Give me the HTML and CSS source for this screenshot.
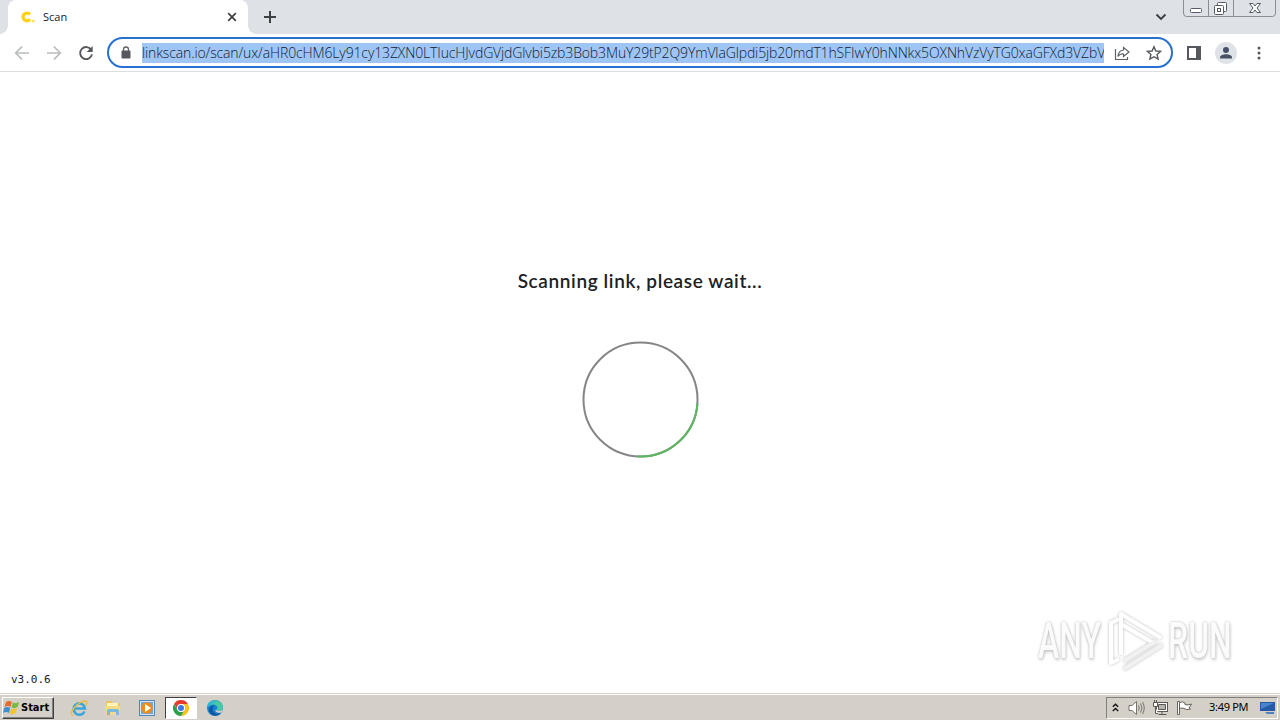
FILE: index.html
```
<!DOCTYPE html>
<html lang="en">
<head>
    <meta charset="UTF-8">
    <meta name="viewport" content="width=device-width, initial-scale=1.0">
    <title>Scan</title>
    <link rel="stylesheet" href="styles.css">
</head>
<body>
    <header class="tabstrip">
        <div class="tab">
            <svg class="favicon" width="16" height="16" viewBox="0 0 16 16">
                <path d="M9.800 5.500A3.800 3.800 0 1 0 9.900 10.200" fill="none" stroke="#fcd116" stroke-width="3.400"/>
                <circle cx="13.200" cy="12" r="1.500" fill="#fbdf62"/>
            </svg>
            <span class="tab-title">Scan</span>
            <svg class="tab-close" width="10" height="10" viewBox="0 0 10 10"><path d="M1.2 1.2 8.8 8.8M8.8 1.2 1.2 8.8" stroke="#3c4043" stroke-width="1.7"/></svg>
        </div>
        <svg class="new-tab" width="14" height="14" viewBox="0 0 14 14"><path d="M7 1v12M1 7h12" stroke="#3c4043" stroke-width="2"/></svg>
        <svg class="tab-search" width="12" height="8" viewBox="0 0 12 8"><path d="M1.5 1.5 6 6l4.500-4.500" fill="none" stroke="#3c4043" stroke-width="1.9"/></svg>
        <div class="window-buttons">
            <svg width="93" height="18" viewBox="0 0 93 18" fill="none" stroke="#8a8d93">
                <path d="M.5 0v13q0 3.500 3 3.500h86q3 0 3-3.500V0M25.500 0v16M50.500 0v16"/>
                <g fill="#fff" stroke="#555a66">
                    <rect x="7.500" y="8.500" width="11" height="4" rx="1"/>
                    <rect x="34.500" y="2.500" width="9" height="9" rx="1"/>
                    <rect x="31.500" y="5.500" width="9" height="9" rx="1"/>
                    <rect x="34.500" y="8.500" width="3" height="3"/>
                    <path d="M66.500 3.500h3.500l2 2.500 2-2.500h3.500l-3.500 4.500 3.500 4.500H74l-2-2.500-2 2.500h-3.500L70 8z"/>
                </g>
            </svg>
        </div>
    </header>

    <nav class="toolbar">
        <svg class="nav-icon" width="16" height="16" viewBox="0 0 16 16"><path d="M15 8H2M8 1.700 1.700 8 8 14.300" fill="none" stroke="#babcbe" stroke-width="1.700"/></svg>
        <svg class="nav-icon" width="16" height="16" viewBox="0 0 16 16"><path d="M1 8h13M8 1.700 14.300 8 8 14.300" fill="none" stroke="#babcbe" stroke-width="1.700"/></svg>
        <svg class="nav-icon" width="16" height="16" viewBox="0 0 16 16">
            <path d="M13.300 5A6 6 0 1 0 14 9.400" fill="none" stroke="#55585c" stroke-width="1.900"/>
            <path d="M14.700 1v6h-6z" fill="#55585c"/>
        </svg>
        <div class="omnibox">
            <svg class="lock" width="10" height="13" viewBox="0 0 10 13">
                <path d="M2.500 5V3.500a2.500 2.500 0 0 1 5 0V5" fill="none" stroke="#5f6368" stroke-width="1.300"/>
                <rect x=".5" y="4.500" width="9" height="8" rx="1" fill="#55585c"/>
            </svg>
            <div class="url"><span>linkscan.io/scan/ux/aHR0cHM6Ly91cy13ZXN0LTIucHJvdGVjdGlvbi5zb3Bob3MuY29tP2Q9YmVlaGlpdi5jb20mdT1hSFIwY0hNNkx5OXNhVzVyTG0xaGFXd3VZbV</span></div>
            <svg class="share" width="16" height="16" viewBox="0 0 16 16" fill="none" stroke="#5f6368" stroke-width="1.200">
                <path d="M1.500 4v10.500h12V12"/>
                <path d="M9.500 2.500 15 7l-5.500 4.500V9Q6 8.500 4 11.500 4.500 5.500 9.500 5z"/>
            </svg>
            <svg class="star" width="16" height="16" viewBox="0 0 16 16"><path d="M8 1.700 9.900 6l4.700.4-3.500 3.100 1 4.600L8 11.700l-4.100 2.400 1-4.600L1.400 6.400 6.100 6z" fill="none" stroke="#55585c" stroke-width="1.400"/></svg>
        </div>
        <svg class="panel-icon" width="14" height="14" viewBox="0 0 14 14"><path d="M1 1h12v12H1z" fill="none" stroke="#55585c" stroke-width="2"/><path d="M9 0h5v14H9z" fill="#55585c"/></svg>
        <svg class="avatar" width="22" height="22" viewBox="0 0 22 22"><circle cx="11" cy="11" r="11" fill="#dfe2e6"/><circle cx="11" cy="8" r="3" fill="#475066"/><path d="M5 16.500v-1.200c0-2 3.500-3.100 6-3.100s6 1.100 6 3.100v1.200z" fill="#475066"/></svg>
        <svg class="menu-icon" width="4" height="14" viewBox="0 0 4 14" fill="#55585c"><circle cx="2" cy="2" r="1.500"/><circle cx="2" cy="7" r="1.500"/><circle cx="2" cy="12" r="1.500"/></svg>
    </nav>

    <main class="page">
        <h1>Scanning link, please wait...</h1>
        <svg class="spinner" width="118" height="118" viewBox="0 0 118 118" fill="none" stroke-width="2">
            <circle cx="58.500" cy="58.500" r="57" stroke="#858585"/>
            <path d="M115.500 62.500A57 57 0 0 1 55.500 115.500" stroke="#5cb860"/>
        </svg>
        <span class="version">v3.0.6</span>
        <div class="watermark">
            <span class="mark-text mark-any">ANY</span>
            <svg width="60" height="64" viewBox="0 0 60 64" fill="none" stroke-linejoin="round">
                <g class="mark-logo" stroke="#fff" stroke-width="4">
                    <path d="M13 10 5 14v40l8-4"/>
                    <path d="M15 46V5l40 24"/>
                    <path d="M15 15l34 20"/>
                    <path d="M56 36 18 60M50 32 18 52" stroke="#f1f1f1"/>
                </g>
            </svg>
            <span class="mark-text mark-run">RUN</span>
        </div>
    </main>

    <footer class="taskbar">
        <div class="start">
            <svg width="17" height="16" viewBox="0 0 17 16">
                <path d="M3 2q3-2 6 0L7.500 7q-3-2-6 0z" fill="#e66b2c"/>
                <path d="M10 2.500q3 1.500 6-.5l-1.500 5q-3 2-6 .5z" fill="#79b943"/>
                <path d="M1.200 8q3-2 6 0L6 13q-3-2-6 0z" fill="#3f8ed0"/>
                <path d="M8.200 8.500q3 1.500 6-.5l-1.500 5q-3 2-6 .5z" fill="#f5c32c"/>
            </svg>
            <span>Start</span>
        </div>
        <div class="launchers">
            <div class="launcher">
                <svg width="18" height="18" viewBox="0 0 18 18" fill="none">
                    <path d="M14.500 12.500A5.700 5.700 0 1 1 15 9.500H5" stroke="#3ba5dd" stroke-width="2.600"/>
                    <path d="M3 16.500Q-1 15 4.500 8.500T16 2q2 1-.5 4.500" stroke="#e9bd3f" stroke-width="1.500"/>
                </svg>
            </div>
            <div class="launcher">
                <svg width="18" height="18" viewBox="0 0 18 18">
                    <path d="M2 2h6l1 2h7v11H2z" fill="#e9c75f"/>
                    <path d="M3 4h11v5H3z" fill="#fff3bb"/>
                    <path d="M1.500 7h15l-1 9h-13z" fill="#f4dc86"/>
                    <path d="M3 16v-4q0-2 2-2h8q2 0 2 2v4h-3v-3H6v3z" fill="#79b9dc"/>
                </svg>
            </div>
            <div class="launcher">
                <svg width="16" height="16" viewBox="0 0 16 16">
                    <rect x=".5" y=".5" width="15" height="15" fill="#d4e6f6" stroke="#4f87bd"/>
                    <rect x="2" y="2" width="12" height="12" fill="#70a7d5"/>
                    <circle cx="8" cy="8" r="5.800" fill="#ef8a1d"/>
                    <path d="M6 4v8l6-4z" fill="#fff"/>
                </svg>
            </div>
            <div class="launcher active">
                <svg width="16" height="16" viewBox="0 0 16 16">
                    <path d="M1.070 4A8 8 0 0 1 14.930 4H8A4 4 0 0 0 4.540 10z" fill="#e33b2e"/>
                    <path d="M14.930 4A8 8 0 0 1 8 16l3.460-6A4 4 0 0 0 8 4z" fill="#fbc116"/>
                    <path d="M8 16A8 8 0 0 1 1.070 4l3.470 6a4 4 0 0 0 6.920 0z" fill="#2c9f4b"/>
                    <circle cx="8" cy="8" r="3.900" fill="#fff"/>
                    <circle cx="8" cy="8" r="3" fill="#3b78e7"/>
                </svg>
            </div>
            <div class="launcher">
                <svg width="16" height="16" viewBox="0 0 16 16">
                    <circle cx="8" cy="8" r="8" fill="#1683d3"/>
                    <path d="M.2 7C1-2 15-2 16 7c0 4-4.500 4.500-6.500 3C12 7 9 4 5.500 4.500 3 4.800 1 6 .2 7z" fill="#47c9a3"/>
                    <path d="M.2 7C1.500 1 8 .5 11 2 7 2 4 4 2 6z" fill="#2eb5df"/>
                    <path d="M6 7c-2 5 3 8 8 6-4 5-12 2-12-3 0-3 3-5 6-4z" fill="#10569f"/>
                    <path d="M9.300 10c2 1.500 5 1 6.700-1l-1.500 3.500Q10 14 8 10.500z" fill="#d5d1c9"/>
                </svg>
            </div>
        </div>
        <div class="tray">
            <svg class="tray-more" width="7" height="9" viewBox="0 0 7 9" fill="none" stroke="#111" stroke-width="1.400"><path d="m.8 3.700 2.700-2.500 2.700 2.500M.8 8l2.700-2.500L6.200 8"/></svg>
            <svg class="tray-sound" width="17" height="16" viewBox="0 0 17 16" stroke="#77736d">
                <path d="M1 5.500h3l4.500-4v13l-4.500-4H1z" fill="#fff"/>
                <path d="M10.500 5.500q1.500 2.500 0 5M12.500 3.500q3 4.500 0 9M14.500 2q3.500 6 0 12" fill="none"/>
            </svg>
            <svg class="tray-net" width="17" height="16" viewBox="0 0 17 16" stroke="#5c5954">
                <rect x="4.500" y="2.500" width="11" height="9" fill="#fff"/>
                <path d="M6.500 4.500h7v5h-7z" fill="#b7b4af"/>
                <path d="M10 12v2M6.500 14.500h8" fill="none"/>
                <path d="M1.500 2.500h4v4h-4zM2.500 0v2M4.500 0v2M3.500 7v6.500H6" fill="#fff"/>
            </svg>
            <svg class="tray-flag" width="17" height="16" viewBox="0 0 17 16" stroke="#66625c" fill="#fff">
                <path d="M3.500 2.500q3-1.500 5.500.5v1.500q3 1 6.500-.5L13 8l1.500 1q-4 1.500-6.500-.5-2-1-4.500 0z"/>
                <path d="M1.500 1.500h2v13h-2z"/>
            </svg>
            <span class="clock">3:49 PM</span>
            <svg class="tray-desktop" width="16" height="14" viewBox="0 0 16 14"><path d="M0 1h15v9H0z" fill="#2459a5"/><path d="M1 2h13L1 8z" fill="#4786cf"/><path d="M5 11h9v2H7z" fill="#4d85b9"/></svg>
        </div>
    </footer>
</body>
</html>
```
FILE: styles.css
```
* {
    box-sizing: border-box;
}
body {
    margin: 0;
    width: 1280px;
    height: 720px;
    overflow: hidden;
    display: flex;
    flex-direction: column;
    background: #fff;
    font-family: "Noto Sans", sans-serif;
    color: #202124;
}
svg {
    display: block;
    flex: none;
}

/* browser chrome */
.tabstrip {
    height: 34px;
    flex: none;
    display: flex;
    align-items: center;
    background: #dee1e6;
    padding-left: 8px;
}
.tab {
    position: relative;
    width: 240px;
    height: 34px;
    display: flex;
    align-items: center;
    background: #fff;
    border-radius: 8px 8px 0 0;
    padding: 0 11px 0 12px;
}
.tab::before,
.tab::after {
    content: "";
    position: absolute;
    bottom: 0;
    width: 8px;
    height: 8px;
}
.tab::before {
    left: -8px;
    background: radial-gradient(circle at 0 0, #dee1e6 7.5px, #fff 8px);
}
.tab::after {
    right: -8px;
    background: radial-gradient(circle at 100% 0, #dee1e6 7.5px, #fff 8px);
}
.tab-title {
    margin-left: 7px;
    margin-top: -2px;
    font-family: "Open Sans", sans-serif;
    font-size: 11px;
    flex: 1;
}
.new-tab {
    margin-left: 15px;
}
.tab-search {
    margin-left: auto;
    margin-right: 16px;
}
.window-buttons {
    align-self: flex-start;
    margin-right: 4px;
}
.toolbar {
    height: 38px;
    flex: none;
    display: flex;
    align-items: center;
    padding-left: 14px;
    border-bottom: 1px solid #dcdee1;
}
.nav-icon {
    margin-right: 16px;
}
.omnibox {
    width: 1066px;
    height: 31px;
    margin-left: -3px;
    display: flex;
    align-items: center;
    border: 2px solid #2870cf;
    border-radius: 16px;
    padding: 0 9px 0 12px;
}
.url {
    width: 962px;
    height: 20px;
    margin: 0 10px 0 11px;
    line-height: 20px;
    background: #9fc5f5;
    color: #101c34;
    font-family: "Open Sans", sans-serif;
    font-size: 14px;
    font-weight: 300;
    letter-spacing: -0.13px;
    white-space: nowrap;
    overflow: hidden;
}
.star {
    margin-left: 16px;
}
.panel-icon {
    margin-left: 14px;
}
.avatar {
    margin-left: 14px;
}
.menu-icon {
    margin-left: 20px;
}

/* page content */
.page {
    position: relative;
    flex: 1;
    display: flex;
    flex-direction: column;
    align-items: center;
    padding-top: 196px;
}
h1 {
    margin: 0;
    font-family: Lato, sans-serif;
    font-size: 19px;
    font-weight: 600;
    line-height: 26px;
    letter-spacing: 0.62px;
    white-space: nowrap;
}
.spinner {
    margin-top: 47px;
    margin-left: 1px;
}
.version {
    position: absolute;
    left: 11px;
    bottom: 6px;
    font-family: "DejaVu Sans Mono", monospace;
    font-size: 11px;
    line-height: 14px;
}
.watermark {
    position: absolute;
    left: 1038px;
    bottom: 20px;
    display: flex;
    align-items: center;
}
.mark-text {
    width: 68px;
    font-family: Roboto, sans-serif;
    font-size: 50px;
    font-weight: 500;
    line-height: 64px;
    color: #fbfbfb;
    text-shadow: 0 0 3px #bbb, 1px 2px 4px #ccc;
    transform: scaleX(0.64);
    transform-origin: left;
}
.mark-logo {
    filter: drop-shadow(0 0 1.5px #bbb);
}
.mark-run {
    margin-left: 2px;
}

/* taskbar */
.taskbar {
    height: 27px;
    flex: none;
    display: flex;
    align-items: center;
    background: #d4d0c8;
    border-top: 1px solid #d4d0c8;
    box-shadow: inset 0 1px #fff;
    padding: 1px 2px 0;
}
.start {
    width: 52px;
    height: 22px;
    display: flex;
    align-items: center;
    gap: 1px;
    border: 1px solid;
    border-color: #fff #404040 #404040 #fff;
    box-shadow: inset -1px -1px #808080;
    font-family: "DejaVu Sans Condensed", "DejaVu Sans", sans-serif;
    font-size: 11px;
    font-weight: bold;
    color: #000;
}
.launchers {
    display: flex;
    gap: 2px;
    margin-left: 9px;
}
.launcher {
    width: 32px;
    height: 22px;
    display: flex;
    align-items: center;
    justify-content: center;
}
.launcher.active {
    background: #fff;
    border: 1px solid;
    border-color: #404040 #fff #fff #404040;
}
.tray {
    width: 172px;
    height: 22px;
    margin-left: auto;
    display: flex;
    align-items: center;
    border: 1px solid;
    border-color: #808080 #fff #fff #808080;
    padding-left: 5px;
}
.tray-sound {
    margin-left: 9px;
}
.tray-net,
.tray-flag {
    margin-left: 7px;
}
.clock {
    margin-left: 16px;
    margin-top: -2px;
    width: 41px;
    font-size: 11px;
    letter-spacing: -0.3px;
    white-space: nowrap;
    color: #000;
}
.tray-desktop {
    margin-left: 10px;
}
```
